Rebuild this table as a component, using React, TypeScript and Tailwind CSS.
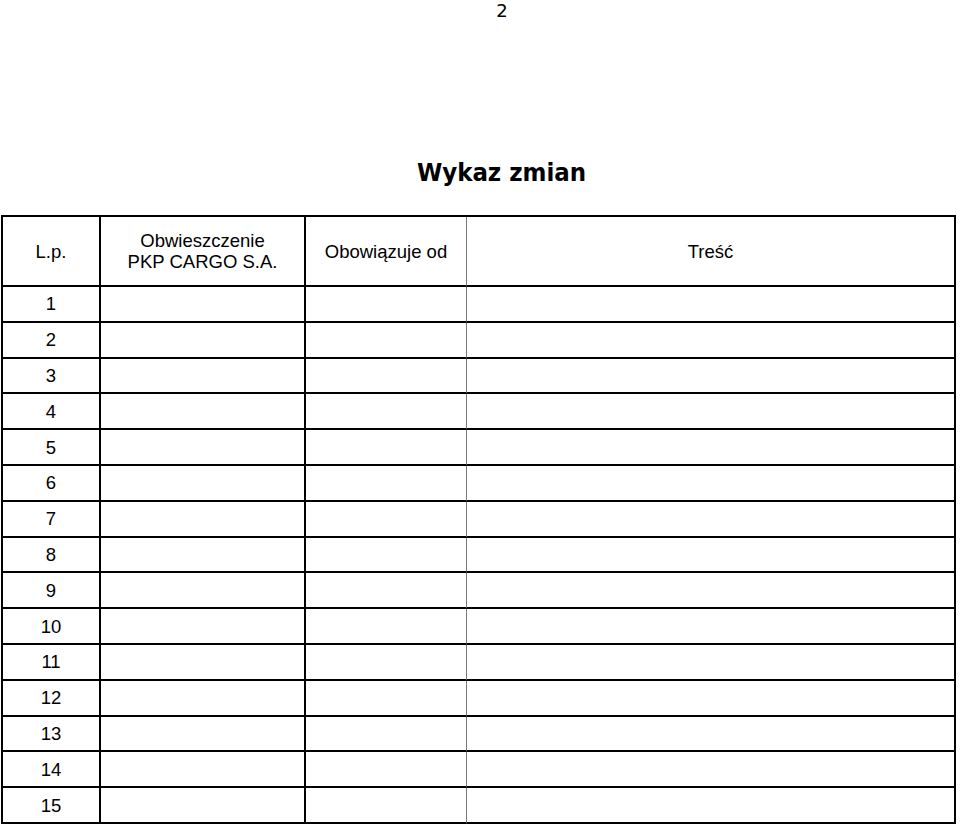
const rows = Array.from({ length: 15 }, (_, i) => i + 1)

function Cell({
  children,
  last,
}: {
  children?: React.ReactNode
  last?: "thin" | "none"
}) {
  return (
    <div
      className={
        last === "thin"
          ? "flex items-center justify-center border-b-2 border-r border-b-black border-r-[#7a7a7a] text-center"
          : last === "none"
            ? "flex items-center justify-center border-b-2 border-black text-center"
            : "flex items-center justify-center border-b-2 border-r-2 border-black text-center"
      }
    >
      {children}
    </div>
  )
}

export default function App() {
  return (
    <div className="min-h-[829px] w-[960px] bg-white text-black">
      <div className="pl-[44px] pt-[1px] text-center font-['DejaVu_Sans',sans-serif] text-[18px] leading-[20px]">
        2
      </div>
      <h1 className="mt-[136px] pl-[43px] text-center font-['DejaVu_Sans_Condensed','DejaVu_Sans',sans-serif] text-[25.5px] font-bold leading-[30px]">
        Wykaz zmian
      </h1>
      <div className="ml-[1px] mt-[28px] grid w-[955px] grid-cols-[98px_205px_161px_1fr] grid-rows-[70px_repeat(15,35.8px)] border-x-2 border-t-2 border-black font-['Liberation_Sans',Arial,sans-serif] text-[18.5px] leading-[21px]">
        <Cell>L.p.</Cell>
        <Cell>
          <span>
            Obwieszczenie
            <br />
            PKP CARGO S.A.
          </span>
        </Cell>
        <Cell last="thin">Obowiązuje od</Cell>
        <Cell last="none">Treść</Cell>
        {rows.map((n) => (
          <div key={n} className="contents">
            <Cell>{n}</Cell>
            <Cell />
            <Cell last="thin" />
            <Cell last="none" />
          </div>
        ))}
      </div>
    </div>
  )
}
